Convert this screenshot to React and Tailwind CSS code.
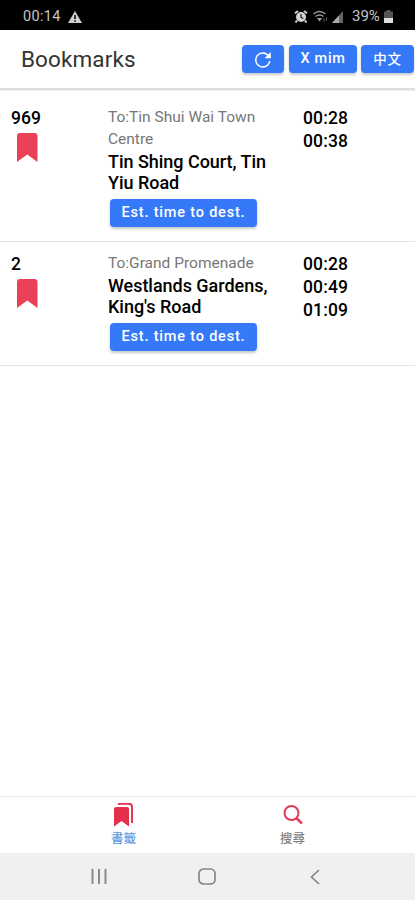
import React from "react";

const BUTTON =
  "flex items-center justify-center rounded-[4px] bg-[#3579f8] font-medium text-white shadow-[0_2px_3px_rgba(0,0,0,0.22)]";

function BookmarkIcon() {
  return (
    <svg className="mt-[3px] ml-[6px] h-[29px] w-[21px]" viewBox="0 0 21 29" fill="#ea4058">
      <path d="M3 0H17.500Q20.500 0 20.500 3V29L10.250 21.500L0 29V3Q0 0 3 0Z" />
    </svg>
  );
}

function StatusBar() {
  return (
    <div className="flex h-[30px] shrink-0 items-center bg-black pt-[3px] text-[#c4c4c4]">
      <span className="ml-[23px] w-[39px] text-[14.5px] tracking-[0.3px] whitespace-nowrap">00:14</span>
      <svg className="ml-[6px] h-[12px] w-[14px]" viewBox="0 0 14 12">
        <path d="M7 0L14 12H0Z" fill="#d0d0d0" />
        <path d="M7 4V8M7 9.300V10.800" stroke="#000" strokeWidth="1.500" />
      </svg>
      <svg className="ml-[212px] h-[13px] w-[14px]" viewBox="0 0 14 13" fill="none">
        <circle cx="7" cy="7" r="5" fill="#d2d2d2" />
        <path d="M1 3.300L4 1M13 3.300L10 1M3 10.500L1.500 12.500M11 10.500L12.500 12.500" stroke="#d2d2d2" strokeWidth="2" />
        <path d="M7 4V7.300L9.300 8.500" stroke="#222" strokeWidth="1.200" />
      </svg>
      <svg className="ml-[5px] h-[13px] w-[15px]" viewBox="0 0 15 13" fill="none" stroke="#999" strokeWidth="1.500">
        <path d="M.5 4Q6.500-1 12.500 4M2.500 6.500Q6.500 3.300 10.500 6.500" />
        <path d="M3.700 8H9.300L6.500 11.500Z" fill="#999" stroke="none" />
        <path d="M11 8V12M13.500 7V11" stroke="#555" strokeWidth="1" />
      </svg>
      <svg className="ml-[4px] h-[12px] w-[11px]" viewBox="0 0 11 12">
        <path d="M0 12L11 0V12Z" fill="#666" />
        <path d="M0 12L7 4.500V12Z" fill="#aaa" />
      </svg>
      <span className="ml-[9px] w-[29px] text-[15px] whitespace-nowrap">39%</span>
      <svg className="ml-[3px] h-[13px] w-[9px]" viewBox="0 0 9 13">
        <path d="M2.500 0H6.500V1.500H9V8H0V1.500H2.500Z" fill="#555" />
        <path d="M0 8H9V13H0Z" fill="#ddd" />
      </svg>
    </div>
  );
}

function Header() {
  return (
    <header className="flex h-[60px] shrink-0 items-start border-b-[2px] border-[#dedede] bg-white shadow-[0_1px_1px_rgba(0,0,0,0.06)]">
      <h1 className="mt-[14px] ml-[21px] w-[221px] text-[22.5px] leading-[30px] tracking-[0.1px] whitespace-nowrap text-[#333]">
        Bookmarks
      </h1>
      <button className={`${BUTTON} mt-[15px] h-[28px] w-[42px]`}>
        <svg className="h-[17px] w-[18px]" viewBox="0 0 18 17" fill="none">
          <path d="M14.500 5A7 7 0 1 0 15.700 10" stroke="#fff" strokeWidth="1.500" />
          <path d="M16.800 1V7.200H10.600Z" fill="#fff" />
        </svg>
      </button>
      <button className={`${BUTTON} mt-[15px] ml-[5px] h-[28px] w-[68px] text-[14.5px] tracking-[0.7px]`}>
        X mim
      </button>
      <button className={`${BUTTON} mt-[15px] ml-[4px] h-[28px] w-[53px] text-[13.5px] tracking-[0.7px]`}>
        中文
      </button>
    </header>
  );
}

function Row({ route, to, stop, times, className }) {
  return (
    <section className={`flex shrink-0 border-b border-[#e4e4e4] pb-[14px] ${className}`}>
      <div className="w-[108px] pt-px pl-[11px]">
        <div className="text-[17.5px] leading-[23px] font-medium text-black">{route}</div>
        <BookmarkIcon />
      </div>
      <div className="w-[195px]">
        <div className="text-[15.5px] leading-[22px] text-[#777]">
          {to.map((line) => (
            <div key={line} className="whitespace-nowrap">{line}</div>
          ))}
        </div>
        <div className="mt-px text-[18px] leading-[21px] font-medium tracking-[-0.03px] text-black">
          {stop.map((line) => (
            <div key={line} className="whitespace-nowrap">{line}</div>
          ))}
        </div>
        <button className={`${BUTTON} mt-[6px] ml-[2px] h-[28px] w-[147px] text-[14.5px] tracking-[0.8px] whitespace-nowrap`}>
          Est. time to dest.
        </button>
      </div>
      <div className="pt-px text-[17.5px] leading-[23px] font-medium tracking-[0.15px] text-black">
        {times.map((time) => (
          <div key={time}>{time}</div>
        ))}
      </div>
    </section>
  );
}

function TabBar() {
  return (
    <nav className="flex h-[57px] shrink-0 border-t border-[#e9e9e9] bg-white pl-[39px] text-[12.5px] leading-[18px] font-medium">
      <div className="flex w-[169px] flex-col items-center text-[#5b9be0]">
        <svg className="mt-[6px] h-[24px] w-[19px]" viewBox="0 0 19 24">
          <path d="M2 4H13Q15 4 15 6V23.500L7.500 18L0 23.500V6Q0 4 2 4Z" fill="#e5304d" />
          <path d="M4 1.500Q5 .8 7 .8H15Q18 .8 18 4V20" fill="none" stroke="#e5304d" strokeWidth="1.900" />
        </svg>
        <span className="mt-[3px]">書籤</span>
      </div>
      <div className="flex w-[169px] flex-col items-center text-[#808080]">
        <svg className="mt-[8px] h-[20px] w-[20px]" viewBox="0 0 20 20" fill="none" stroke="#e13c58">
          <circle cx="8.500" cy="8" r="7" strokeWidth="2" />
          <path d="M13.300 13L19 18.500" strokeWidth="2.500" />
        </svg>
        <span className="mt-[5px]">搜尋</span>
      </div>
    </nav>
  );
}

function SystemNav() {
  return (
    <div className="flex h-[47px] shrink-0 items-center bg-[#f0f0f0] pl-[91px]">
      <svg className="h-[17px] w-[16px]" viewBox="0 0 16 17" stroke="#8a8a8a" strokeWidth="2">
        <path d="M1.500 1V16M8 1V16M14.500 1V16" />
      </svg>
      <svg className="ml-[91px] h-[17px] w-[18px]" viewBox="0 0 18 17" fill="none" stroke="#858585" strokeWidth="1.700">
        <rect x="1" y="1" width="16" height="15" rx="4.500" />
      </svg>
      <svg className="ml-[94px] h-[16px] w-[10px]" viewBox="0 0 10 16" fill="none" stroke="#858585" strokeWidth="1.700">
        <path d="M9 1L1.500 8L9 15" />
      </svg>
    </div>
  );
}

export default function App() {
  return (
    <div className="flex h-[900px] w-[415px] flex-col overflow-hidden bg-white font-[Roboto,'Noto_Sans_CJK_TC',sans-serif]">
      <StatusBar />
      <Header />
      <main className="flex flex-1 flex-col">
        <Row
          className="pt-[16px]"
          route="969"
          to={["To:Tin Shui Wai Town", "Centre"]}
          stop={["Tin Shing Court, Tin", "Yiu Road"]}
          times={["00:28", "00:38"]}
        />
        <Row
          className="pt-[10px]"
          route="2"
          to={["To:Grand Promenade"]}
          stop={["Westlands Gardens,", "King's Road"]}
          times={["00:28", "00:49", "01:09"]}
        />
      </main>
      <TabBar />
      <SystemNav />
    </div>
  );
}
